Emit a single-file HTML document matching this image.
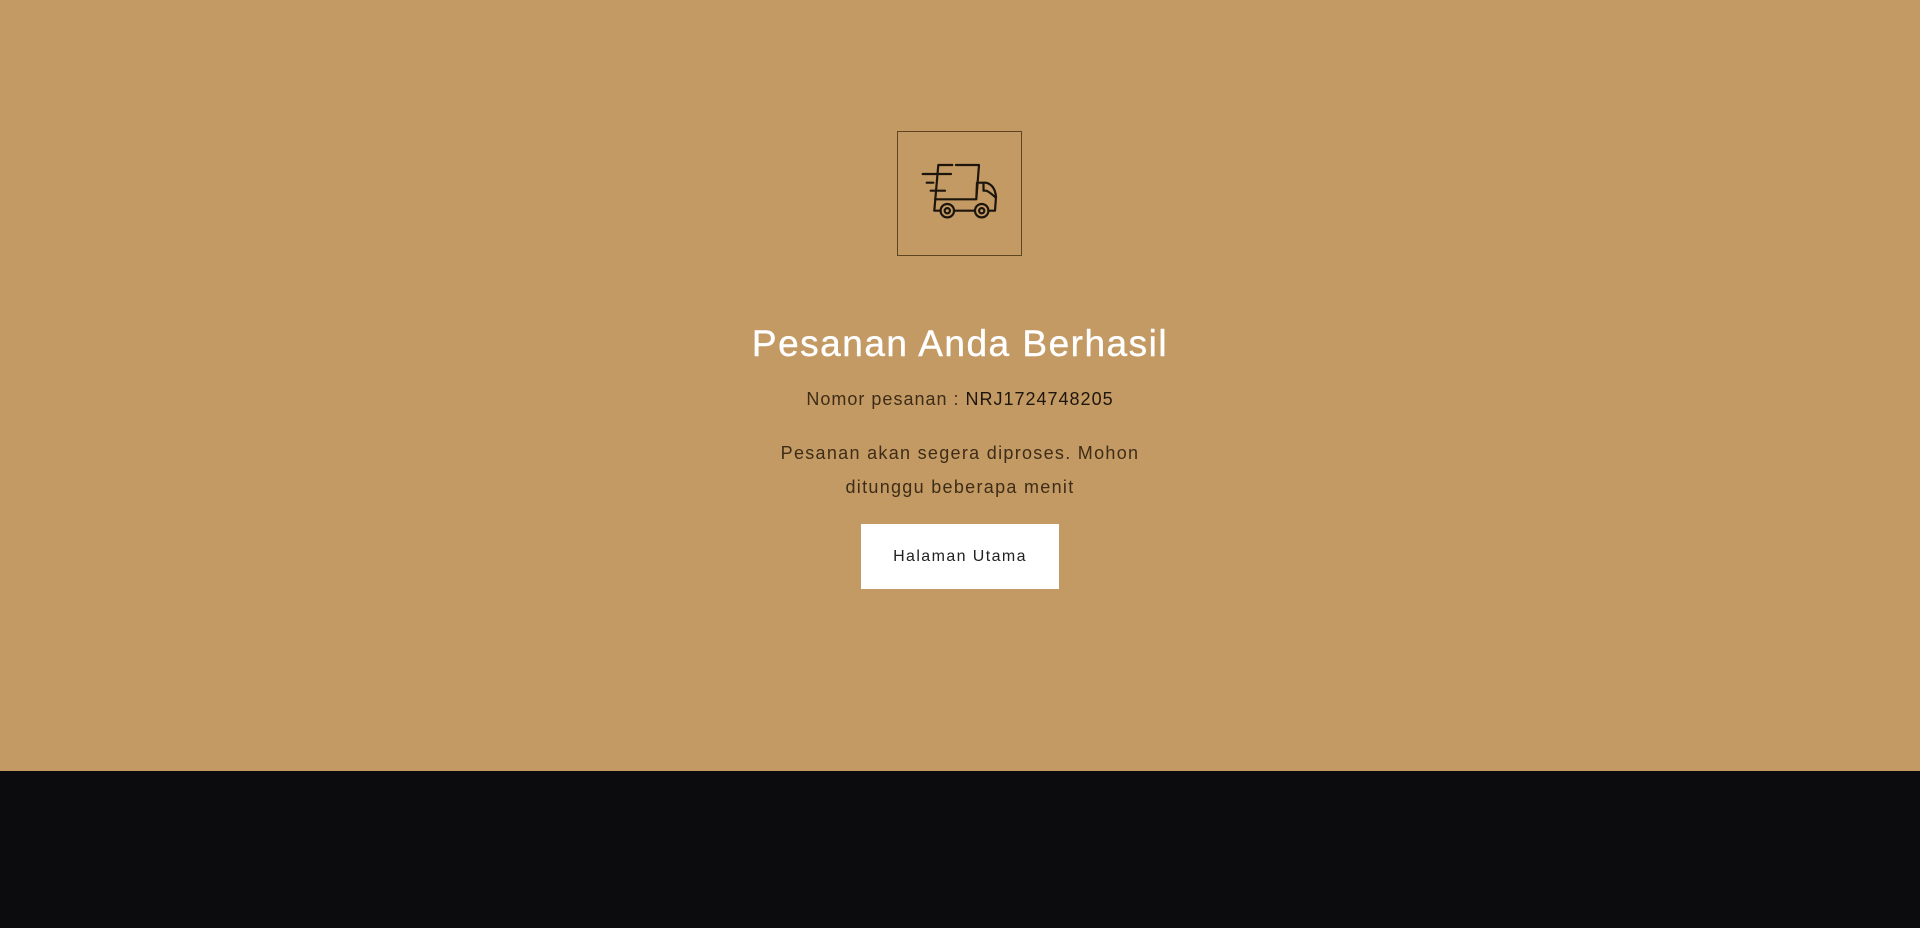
<!DOCTYPE html>
<html><head><meta charset="utf-8"><style>
html,body{margin:0;padding:0;width:1920px;height:928px;overflow:hidden;font-family:"Liberation Sans",sans-serif}
.top{position:absolute;left:0;top:0;width:1920px;height:771px;background:#c49a64}
.bot{position:absolute;left:0;top:771px;width:1920px;height:157px;background:#0c0c0e}
.box{position:absolute;left:897px;top:131px;width:123px;height:123px;border:1px solid #5e4522}
h1{position:absolute;left:0;width:1920px;top:321px;margin:0;text-align:center;color:#fff;font-weight:normal;font-size:37px;letter-spacing:1.5px;line-height:46px;-webkit-text-stroke:0.4px #fff}
.num{position:absolute;left:0;width:1920px;top:387px;text-align:center;color:#3d2c17;font-size:18px;letter-spacing:1px;line-height:24px}
.num b{font-weight:normal;color:#1e160c}
.p{position:absolute;left:740px;width:440px;top:436px;text-align:center;color:#3d2c17;font-size:18px;letter-spacing:1.3px;line-height:34px}
.btn{position:absolute;left:861px;top:524px;width:198px;height:65px;background:#fff;color:#222;font-size:16px;letter-spacing:1.4px;line-height:65px;text-align:center}
</style></head><body>
<div class="top">
<div class="box"><svg width="123" height="123" viewBox="1 1 123 123" fill="none" stroke="#1c150c" stroke-width="2.2" stroke-linecap="round" stroke-linejoin="round">
<path d="M41.3 34H55.3M59 34H82L79.3 68.3H38M41.3 34L37.3 79.7H43.6M57 79.7H78M91.4 79.7H98L99 66Q98 54 89 51.7H80L79.3 68.3M86.5 52V59.7H89.5Q94 62 99 67"/>
<path d="M25.7 43H54M29.7 51.7H36.3M33.7 59.7H48"/>
<circle cx="50.3" cy="79.7" r="6.7"/><circle cx="50.3" cy="79.7" r="2.6"/>
<circle cx="84.7" cy="79.7" r="6.7"/><circle cx="84.7" cy="79.7" r="2.6"/>
</svg></div>
<h1>Pesanan Anda Berhasil</h1>
<div class="num">Nomor pesanan : <b>NRJ1724748205</b></div>
<div class="p">Pesanan akan segera diproses. Mohon<br>ditunggu beberapa menit</div>
<div class="btn">Halaman Utama</div>
</div>
<div class="bot"></div>
</body></html>
